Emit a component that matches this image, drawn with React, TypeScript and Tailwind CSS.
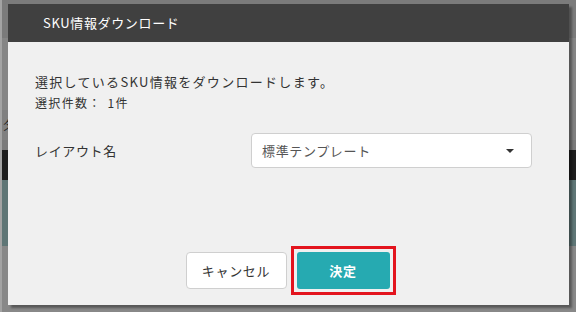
import React from "react"

const jp = { fontFamily: '"Noto Sans CJK JP", "Noto Sans", sans-serif' }

function BackgroundPage() {
  // dimmed page behind the dialog
  return (
    <div className="flex h-full w-full flex-col bg-[#7d7d7d]">
      <div className="h-[38px] bg-[#7b7b7b]" />
      <div className="h-[72px] bg-[#858585]" />
      <div className="flex h-[30px] items-center bg-[#808080] pl-0 text-[13px] text-[#222]">タ</div>
      <div className="h-[10px] bg-[#7a7a7a]" />
      <div className="h-[30px] bg-[#1e1e1e]" />
      <div className="h-[66px] bg-[#5f7676]" />
      <div className="flex-1 bg-[#888888]" />
    </div>
  )
}

function Dialog() {
  return (
    <div className="flex h-[301px] w-[561px] flex-col bg-[#f0f0f0] shadow-[3px_3px_2px_rgba(0,0,0,0.35)]" style={jp}>
      <div className="flex h-[38px] items-center bg-[#404040] pl-[35px] text-[13px] tracking-wider text-white">
        SKU情報ダウンロード
      </div>
      <div className="flex flex-1 flex-col px-[27px]">
        <div className="mt-[29px] text-[12px] leading-[21px] text-[#333]">
          <p className="text-[13px] tracking-[0.1em]">選択しているSKU情報をダウンロードします。</p>
          <p className="tracking-[0.11em]">
            選択件数：<span className="ml-[6px]">1件</span>
          </p>
        </div>
        <div className="mt-[20px] flex items-center">
          <div className="w-[216px] text-[13px] tracking-wider text-[#333]">レイアウト名</div>
          <div className="flex h-[35px] w-[281px] items-center justify-between rounded-[4px] border border-[#cfcfcf] bg-white pl-[10px] pr-[17px] text-[13px] tracking-wider text-[#555]">
            <span>標準テンプレート</span>
            <svg width="8" height="4" viewBox="0 0 8 4">
              <path d="M0 0h8L4 4z" fill="#333" />
            </svg>
          </div>
        </div>
        <div className="mt-auto mb-[10px] flex justify-center gap-[4px] pl-[4px]">
          <button className="mt-[6px] h-[37px] w-[101px] rounded-[4px] border border-[#cfcfcf] bg-white text-[13px] tracking-wider text-[#333]">
            キャンセル
          </button>
          <div className="border-[3px] border-[#e3141e] p-[3px]">
            <button className="h-[37px] w-[93px] rounded-[3px] bg-[#26aab1] text-[13px] font-bold tracking-wider text-white">
              決定
            </button>
          </div>
        </div>
      </div>
    </div>
  )
}

export default function App() {
  return (
    <div className="relative h-[312px] w-[576px] overflow-hidden border-l-2 border-[#a3a3a3]">
      <BackgroundPage />
      <div className="absolute left-[6px] top-[4px]">
        <Dialog />
      </div>
    </div>
  )
}
